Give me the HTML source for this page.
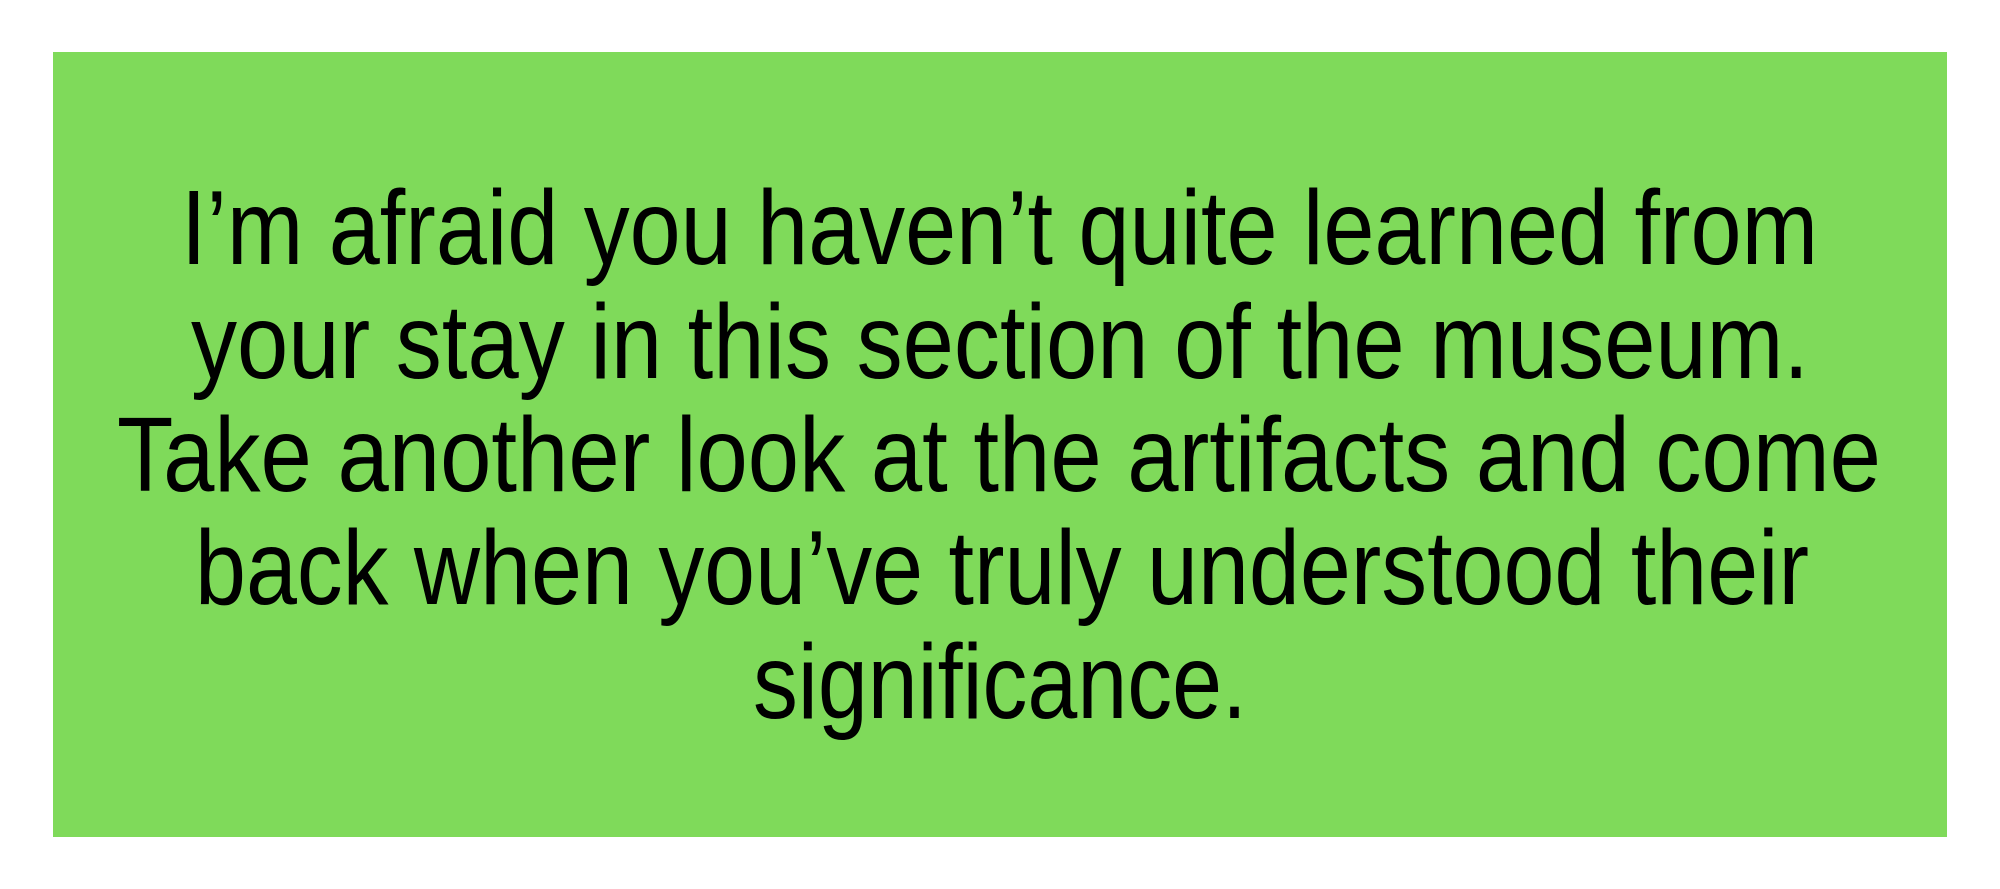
<!DOCTYPE html>
<html><head><style>html,body{margin:0;padding:0;background:#fff;width:2000px;height:889px;overflow:hidden}</style></head>
<body>
<svg width="2000" height="889" viewBox="0 0 2000 889" xmlns="http://www.w3.org/2000/svg">
<rect x="0" y="0" width="2000" height="889" fill="#fff"/>
<rect x="53" y="52" width="1894" height="785" fill="#7fda5a"/>
<g font-family="Liberation Sans, sans-serif" font-size="106" fill="#000">
<text x="181" y="264" textLength="1637" lengthAdjust="spacingAndGlyphs">I’m afraid you haven’t quite learned from</text>
<text x="191" y="378" textLength="1618" lengthAdjust="spacingAndGlyphs">your stay in this section of the museum.</text>
<text x="117" y="491" textLength="1764" lengthAdjust="spacingAndGlyphs">Take another look at the artifacts and come</text>
<text x="195" y="604" textLength="1614" lengthAdjust="spacingAndGlyphs">back when you’ve truly understood their</text>
<text x="753" y="718" textLength="494" lengthAdjust="spacingAndGlyphs">significance.</text>
</g>
</svg>
</body></html>
